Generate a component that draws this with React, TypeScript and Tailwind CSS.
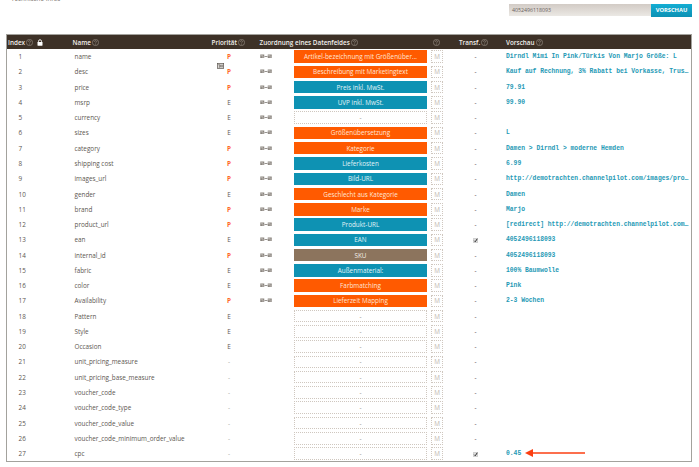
import React from "react";

type Tone = "orange" | "blue" | "brown" | "empty";

interface Row {
  name: string;
  priority: "P" | "E" | "-";
  tone: Tone;
  field?: string;
  transfer?: boolean;
  preview?: string;
  arrow?: boolean;
}

const rows: Row[] = [
  { name: "name", priority: "P", tone: "orange", field: "Artikel-bezeichnung mit Größenüber...", preview: "Dirndl Mimi In Pink/Türkis Von Marjo Größe: L" },
  { name: "desc", priority: "P", tone: "orange", field: "Beschreibung mit Marketingtext", preview: "Kauf auf Rechnung, 3% Rabatt bei Vorkasse, Trus…" },
  { name: "price", priority: "P", tone: "blue", field: "Preis inkl. MwSt.", preview: "79.91" },
  { name: "msrp", priority: "E", tone: "blue", field: "UVP inkl. MwSt.", preview: "99.90" },
  { name: "currency", priority: "E", tone: "empty" },
  { name: "sizes", priority: "E", tone: "orange", field: "Größenübersetzung", preview: "L" },
  { name: "category", priority: "P", tone: "orange", field: "Kategorie", preview: "Damen > Dirndl > moderne Hemden" },
  { name: "shipping cost", priority: "P", tone: "blue", field: "Lieferkosten", preview: "6.99" },
  { name: "images_url", priority: "P", tone: "blue", field: "Bild-URL", preview: "http://demotrachten.channelpilot.com/images/pro…" },
  { name: "gender", priority: "E", tone: "orange", field: "Geschlecht aus Kategorie", preview: "Damen" },
  { name: "brand", priority: "P", tone: "orange", field: "Marke", preview: "Marjo" },
  { name: "product_url", priority: "P", tone: "blue", field: "Produkt-URL", preview: "[redirect] http://demotrachten.channelpilot.com…" },
  { name: "ean", priority: "E", tone: "blue", field: "EAN", transfer: true, preview: "4052496118093" },
  { name: "internal_id", priority: "P", tone: "brown", field: "SKU", preview: "4052496118093" },
  { name: "fabric", priority: "E", tone: "blue", field: "Außenmaterial:", preview: "100% Baumwolle" },
  { name: "color", priority: "E", tone: "orange", field: "Farbmatching", preview: "Pink" },
  { name: "Availability", priority: "P", tone: "orange", field: "Lieferzeit Mapping", preview: "2-3 Wochen" },
  { name: "Pattern", priority: "E", tone: "empty" },
  { name: "Style", priority: "E", tone: "empty" },
  { name: "Occasion", priority: "E", tone: "empty" },
  { name: "unit_pricing_measure", priority: "-", tone: "empty" },
  { name: "unit_pricing_base_measure", priority: "-", tone: "empty" },
  { name: "voucher_code", priority: "-", tone: "empty" },
  { name: "voucher_code_type", priority: "-", tone: "empty" },
  { name: "voucher_code_value", priority: "-", tone: "empty" },
  { name: "voucher_code_minimum_order_value", priority: "-", tone: "empty" },
  { name: "cpc", priority: "-", tone: "empty", transfer: true, preview: "0.45", arrow: true },
];

const tones: Record<Tone, string> = {
  orange: "bg-[#ff5a00] text-[#ffe6d8]",
  blue: "bg-[#0e92b3] text-[#e2f4f8]",
  brown: "bg-[#8c745d] text-[#f1ece6]",
  empty: "border border-dotted border-[#cfc7bf] text-[#a09890]",
};

const columns = "grid grid-cols-[65px_137px_50px_35px_133px_4px_12px_16px_47px_1fr]";

function Help() {
  return (
    <svg className="h-[7px] w-[7px] shrink-0" viewBox="0 0 14 14" fill="none" stroke="#aaa299" strokeWidth="1.1">
      <circle cx="7" cy="7" r="6.2" />
      <path d="M5 5.4a2 2 0 1 1 3 1.7C7.3 7.6 7 7.9 7 8.7M7 10v1.2" />
    </svg>
  );
}

function Lock() {
  return (
    <svg className="ml-[3px] h-[7px] w-[6px] shrink-0" viewBox="0 0 12 14">
      <path d="M3 7V4.5a3 3 0 0 1 6 0V7" fill="none" stroke="#fff" strokeWidth="1.8" />
      <rect x="1" y="6" width="10" height="7.5" rx="0.8" fill="#fff" />
    </svg>
  );
}

function MappingIcon() {
  return (
    <svg className="h-[5px] w-3" viewBox="0 0 24 10">
      <path d="M0.500 1h8v7h-8zM15.500 1h8v7h-8z" fill="#8b857f" />
      <path d="M9 5h6" stroke="#77716b" strokeWidth="1.5" />
      <path d="M1 3.500h5M4 6h4M16 3.500h5M19 6h4" stroke="#e4e1de" strokeWidth="1.1" />
    </svg>
  );
}

function CardIcon() {
  return (
    <svg className="absolute left-[210px] top-[27.500px] h-[6px] w-[7px]" viewBox="0 0 14 12">
      <rect x="0.7" y="1" width="12.6" height="10" fill="#e4e2df" stroke="#5c5650" strokeWidth="1.4" />
      <path d="M2.5 3.5h3v5h-2M7.5 3.5v5M8.500 4.500h4M8.500 7.500h4" fill="none" stroke="#5c5650" strokeWidth="1.4" />
    </svg>
  );
}

function Check() {
  return (
    <svg className="mt-[2px] h-[5px] w-[5px]" viewBox="0 0 10 10">
      <rect x="0.5" y="0.5" width="9" height="9" rx="1.5" fill="#dedede" stroke="#aaa" />
      <path d="M2.5 5.500l2 2 4-6" fill="none" stroke="#2c2c2c" strokeWidth="2" />
    </svg>
  );
}

function Arrow() {
  return (
    <svg className="mb-px ml-[4px] h-[8px] w-[60px] shrink-0" viewBox="0 0 60 8">
      <path d="M7 4h53" stroke="#fb3f12" strokeWidth="1.7" />
      <path d="M0 4L8 0v8z" fill="#fb3f12" />
    </svg>
  );
}

function TableRow({ row, index }: { row: Row; index: number }) {
  return (
    <div className={`${columns} h-[15.270px] items-center`}>
      <span className="pl-[11.500px]">{index}</span>
      <span className="pl-[2.500px]">{row.name}</span>
      <span className={`pr-[10px] text-center ${row.priority === "P" ? "font-bold text-[#ff6628]" : row.priority === "-" ? "text-[#aaa]" : ""}`}>
        {row.priority}
      </span>
      <span className="pl-px">{(row.field || row.name === "currency") && <MappingIcon />}</span>
      <span className={`flex h-[12.500px] items-center justify-center ${tones[row.tone]}`}>{row.field ?? "-"}</span>
      <span />
      <span className="flex h-[12.500px] items-center justify-center border border-dotted border-[#cfc7bf] text-[#bdb5ad]">M</span>
      <span />
      <span className="flex justify-center pr-[14px]">{row.transfer ? <Check /> : "-"}</span>
      <span className="flex items-center whitespace-nowrap font-['Liberation_Mono',monospace] text-[6.330px] font-bold text-[#2599b5]">
        {row.preview}
        {row.arrow && <Arrow />}
      </span>
    </div>
  );
}

export default function App() {
  return (
    <div className="h-[467px] w-[699px] overflow-hidden bg-white font-['Open_Sans',sans-serif] text-[6.350px] leading-[9px] text-[#5c5650]">
      <div className="flex h-[34px] items-start justify-between pl-[11px] pr-[7px]">
        <span className="-mt-[6px] whitespace-nowrap text-[#77716b]">Technische Infos</span>
        <div className="mt-[3.500px] flex h-[13px]">
          <div className="flex h-[12.500px] w-[142px] items-center bg-linear-to-b from-[#d2cbc5] to-[#ebe8e4] pl-[3px] pt-px text-[5.250px] text-[#68615b]">
            4052496118093
          </div>
          <button className="flex w-[41px] items-center justify-center bg-linear-to-b from-[#13add3] to-[#0c91b4] pt-px text-[5.750px] font-bold text-white">
            VORSCHAU
          </button>
        </div>
      </div>
      <div className="ml-[6px] w-[686px] border border-[#a3a29d]">
        <div className={`${columns} h-[14px] items-center whitespace-nowrap bg-[#3d3127] font-semibold text-[#f2efec]`}>
          <span className="flex items-center gap-px pl-[1px]">Index <Help /><Lock /></span>
          <span className="flex items-center gap-px pl-[0.500px]">Name <Help /></span>
          <span className="flex items-center gap-px pl-[2.500px]">Priorität <Help /></span>
          <span className="flex items-center gap-px pl-[0.500px]">Zuordnung eines Datenfeldes <Help /></span>
          <span />
          <span />
          <span className="pl-[2px]"><Help /></span>
          <span />
          <span className="flex items-center gap-px">Transf. <Help /></span>
          <span className="flex items-center gap-px">Vorschau <Help /></span>
        </div>
        <div className="relative h-[412px]">
          {rows.map((row, i) => (
            <TableRow key={row.name} row={row} index={i + 1} />
          ))}
          <div className="absolute -top-[14px] left-0 h-0 w-0"><CardIcon /></div>
        </div>
      </div>
    </div>
  );
}
